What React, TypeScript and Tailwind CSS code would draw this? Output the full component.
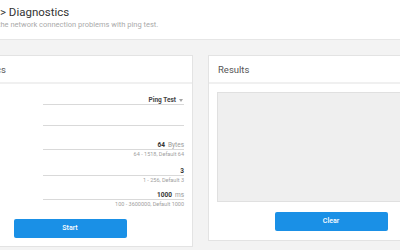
import React from 'react';

const font = { fontFamily: 'Roboto, "Liberation Sans", sans-serif' };

type FieldProps = {
  value?: string;
  unit?: string;
  helper?: string;
  h: string;
};

const Field: React.FC<FieldProps> = ({ value, unit, helper, h }) => (
  <div className="flex flex-col">
    <div className={`${h} flex items-end justify-end border-b border-[#d9d9d9]`}>
      {value && (
        <span className="text-[6.5px] leading-[8px] font-bold text-[#333]">{value}</span>
      )}
      {unit && (
        <span className="ml-[3px] text-[6.5px] leading-[8px] text-[#9a9a9a]">{unit}</span>
      )}
    </div>
    {helper && (
      <div className="text-right text-[5.5px] leading-[9px] text-[#a0a0a0]">{helper}</div>
    )}
  </div>
);

const App: React.FC = () => {
  return (
    <div className="w-[400px] h-[250px] overflow-hidden bg-[#f3f3f3]" style={font}>
      <header className="h-[40px] bg-white border-b border-[#e6e6e6] pt-[5px]">
        <h1 className="text-[11.5px] leading-[14px] font-normal text-[#333]">&gt; Diagnostics</h1>
        <p className="-ml-[2px] mt-[1px] text-[7.5px] leading-[9px] text-[#aaa]">
          the network connection problems with ping test.
        </p>
      </header>

      <div className="flex items-start gap-[15px] pt-[15px] -ml-[53px]">
        <section className="w-[246px] shrink-0 h-[192px] bg-white border border-[#e3e3e3] flex flex-col">
          <div className="h-[28px] pl-[8px] pt-[3px] flex items-center border-b-2 border-[#f0f0f0]">
            <h2 className="text-[9.5px] text-[#555]">Diagnostics</h2>
          </div>
          <div className="ml-[95px] mr-[8px] flex flex-col">
            <div className="mt-[8px] h-[13px] flex items-end justify-end border-b border-[#d9d9d9]">
              <span className="text-[6.5px] leading-[8px] font-bold text-[#444]">Ping Test</span>
              <span className="ml-[3px] mr-[1px] mb-[2px] w-0 h-0 border-l-[2.5px] border-r-[2.5px] border-t-[3px] border-l-transparent border-r-transparent border-t-[#a5a5a5]" />
            </div>
            <Field h="h-[21px]" />
            <Field h="h-[24px]" value="64" unit="Bytes" helper="64 - 1518, Default 64" />
            <Field h="h-[17px]" value="3" helper="1 - 256, Default 3" />
            <Field h="h-[15px]" value="1000" unit="ms" helper="100 - 3600000, Default 1000" />
          </div>
          <button className="mx-auto mt-[10px] w-[113px] h-[19px] rounded-[2px] bg-[#1a90e6] text-white text-[7px] font-medium">
            Start
          </button>
        </section>

        <section className="w-[246px] shrink-0 h-[186px] bg-white border border-[#e3e3e3] flex flex-col">
          <div className="h-[28px] px-[9px] pt-[3px] flex items-center border-b-2 border-[#f0f0f0]">
            <h2 className="text-[9.5px] text-[#555]">Results</h2>
          </div>
          <div className="mx-[8px] mt-[8px] h-[110px] bg-[#efefef] border border-[#e0e0e0]" />
          <button className="mx-auto mt-[10px] w-[113px] h-[19px] rounded-[2px] bg-[#1a90e6] text-white text-[7px] font-medium">
            Clear
          </button>
        </section>
      </div>
    </div>
  );
};

export default App;
